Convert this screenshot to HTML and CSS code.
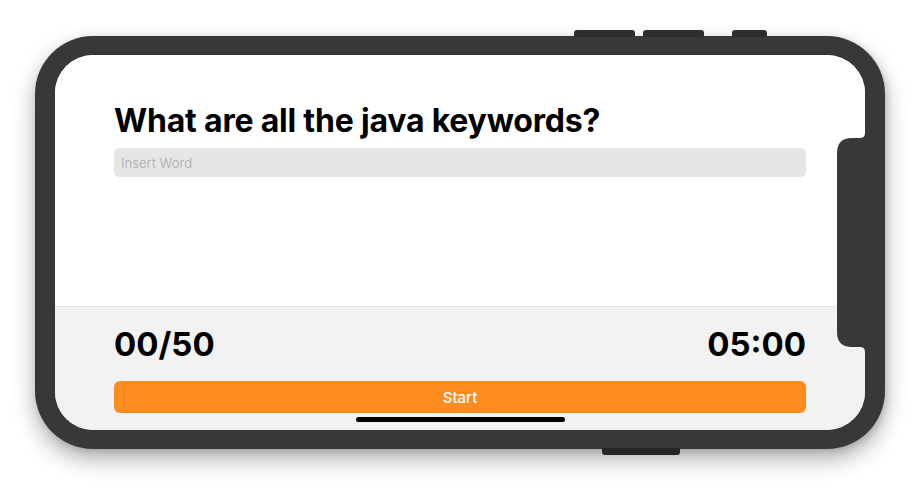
FILE: index.html
```html
<!DOCTYPE html>
<html lang="en">
<head>
<meta charset="utf-8">
<title>Java Keywords Quiz</title>
<link rel="stylesheet" href="styles.css">
</head>
<body>
<div class="stage">
  <div class="device">
    <span class="hw hw-top hw-1"></span>
    <span class="hw hw-top hw-2"></span>
    <span class="hw hw-top hw-3"></span>
    <span class="hw hw-bottom"></span>
    <div class="screen">
      <div class="content">
        <h1 class="question">What are all the java keywords?</h1>
        <input class="word-input" type="text" placeholder="Insert Word">
      </div>
      <div class="footer">
        <div class="stats">
          <span class="stat">00/50</span>
          <span class="stat">05:00</span>
        </div>
        <button class="start-btn" type="button">Start</button>
        <div class="home-indicator"></div>
      </div>
      <svg class="notch" width="28" height="219" viewBox="0 0 28 219" aria-hidden="true">
        <path d="M28 0 Q28 5 23 5 L15 5 Q0 5 0 20 L0 199 Q0 214 15 214 L23 214 Q28 214 28 219 Z" fill="#383838"/>
      </svg>
    </div>
  </div>
</div>
</body>
</html>
```

FILE: styles.css
```css
* { box-sizing: border-box; }

html, body {
  margin: 0;
  padding: 0;
  background: #ffffff;
  font-family: Inter, "Noto Sans", "Liberation Sans", sans-serif;
}

.stage {
  padding: 36px 0 0 35px;
  width: 920px;
  height: 501px;
  overflow: hidden;
}

.device {
  position: relative;
  width: 850px;
  height: 413px;
  padding: 19px 20px;
  background: #383838;
  border-radius: 58px;
  box-shadow: 0 10px 22px rgba(0, 0, 0, 0.32), 2px 2px 6px rgba(0, 0, 0, 0.12);
}

.hw {
  position: absolute;
  background: #2e2e2e;
  height: 7px;
}

.hw-top {
  top: -6px;
  border-radius: 3px 3px 0 0;
}

.hw-1 { left: 539px; width: 61px; }
.hw-2 { left: 608px; width: 61px; }
.hw-3 { left: 697px; width: 35px; }

.hw-bottom {
  bottom: -6px;
  left: 567px;
  width: 78px;
  border-radius: 0 0 3px 3px;
  background: #262626;
}

.screen {
  position: relative;
  width: 810px;
  height: 375px;
  border-radius: 38px;
  overflow: hidden;
  display: flex;
  flex-direction: column;
  background: #ffffff;
}

.content {
  flex: 1;
  padding: 46px 59px 0;
  background: #ffffff;
}

.question {
  margin: 0;
  font-size: 32px;
  line-height: 39px;
  font-weight: 700;
  color: #000;
  letter-spacing: -0.2px;
}

.word-input {
  display: block;
  width: 100%;
  height: 29px;
  margin-top: 8px;
  border: none;
  border-radius: 5px;
  background: #e6e6e7;
  padding: 0 7px;
  font-family: inherit;
  font-size: 13px;
  color: #333;
  outline: none;
}

.word-input::placeholder {
  color: #b4b4b6;
}

.footer {
  height: 124px;
  background: #f2f2f2;
  border-top: 1px solid #e3e3e3;
  padding: 17px 59px 0;
  display: flex;
  flex-direction: column;
}

.stats {
  display: flex;
  justify-content: space-between;
}

.stat {
  font-size: 33px;
  line-height: 40px;
  font-weight: 700;
  color: #000;
}

.start-btn {
  margin-top: 17px;
  height: 32px;
  width: 100%;
  border: none;
  border-radius: 6px;
  background: #fe8b1f;
  color: #fff;
  font-family: inherit;
  font-size: 15px;
  font-weight: 500;
}

.home-indicator {
  align-self: center;
  width: 209px;
  height: 5px;
  margin-top: 4px;
  border-radius: 3px;
  background: #000;
}

.notch {
  position: absolute;
  right: 0;
  top: 78px;
  display: block;
}
```
